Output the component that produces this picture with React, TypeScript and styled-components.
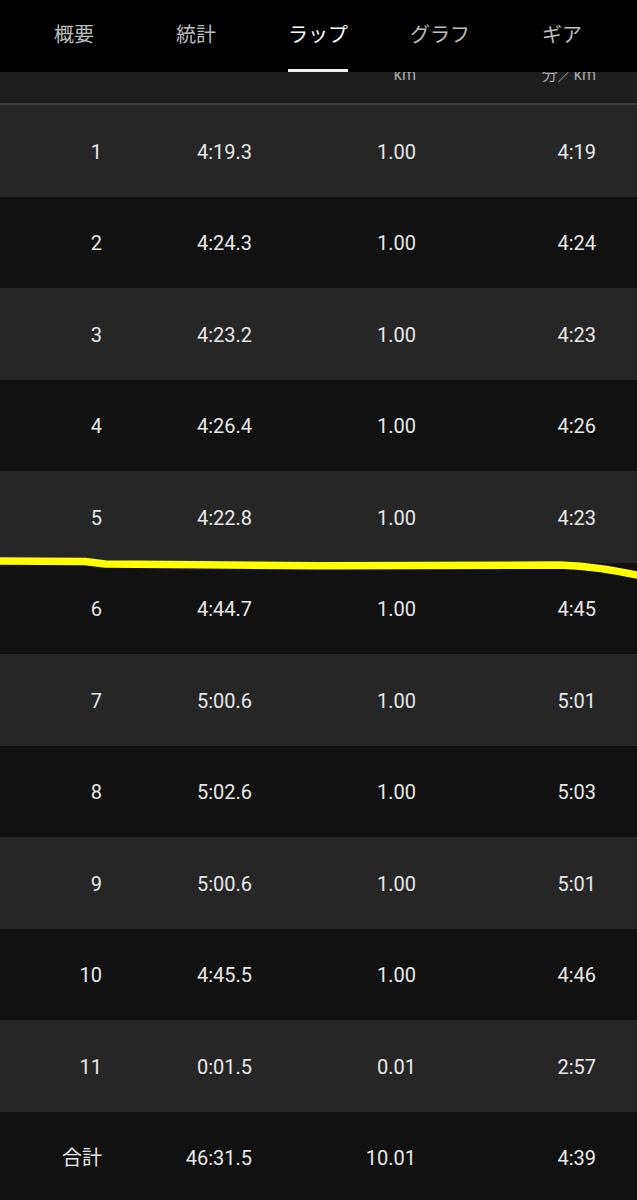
import React from 'react';
import styled, { createGlobalStyle, css } from 'styled-components';

const GlobalStyle = createGlobalStyle`
  html, body {
    margin: 0;
    padding: 0;
    background: #111111;
  }
  body {
    font-family: Roboto, "Noto Sans CJK JP", sans-serif;
    -webkit-font-smoothing: antialiased;
  }
`;

const tabs = ['概要', '統計', 'ラップ', 'グラフ', 'ギア'];
const activeTab = 2;

const laps = [
  ['1', '4:19.3', '1.00', '4:19'],
  ['2', '4:24.3', '1.00', '4:24'],
  ['3', '4:23.2', '1.00', '4:23'],
  ['4', '4:26.4', '1.00', '4:26'],
  ['5', '4:22.8', '1.00', '4:23'],
  ['6', '4:44.7', '1.00', '4:45'],
  ['7', '5:00.6', '1.00', '5:01'],
  ['8', '5:02.6', '1.00', '5:03'],
  ['9', '5:00.6', '1.00', '5:01'],
  ['10', '4:45.5', '1.00', '4:46'],
  ['11', '0:01.5', '0.01', '2:57'],
];

const total = ['合計', '46:31.5', '10.01', '4:39'];

const columns = '102px 150px 164px 180px';

const Screen = styled.div`
  position: relative;
  width: 637px;
  height: 1200px;
  overflow: hidden;
  background: #111111;
`;

const TabBar = styled.nav`
  display: grid;
  grid-template-columns: repeat(5, 122px);
  padding: 0 13px;
  height: 72px;
  background: #000000;
`;

const Tab = styled.div<{ $active?: boolean }>`
  position: relative;
  display: flex;
  align-items: center;
  justify-content: center;
  padding-bottom: 6px;
  box-sizing: border-box;
  font-family: "Noto Sans CJK JP", sans-serif;
  font-size: 20px;
  color: ${(p) => (p.$active ? '#ffffff' : '#bdbdbd')};
  ${(p) =>
    p.$active &&
    css`
      &::after {
        content: '';
        position: absolute;
        left: 50%;
        bottom: 0;
        width: 60px;
        height: 3px;
        transform: translateX(-50%);
        background: #f2f2f2;
      }
    `}
`;

const UnitRow = styled.div`
  display: grid;
  grid-template-columns: ${columns};
  height: 31px;
  overflow: hidden;
  background: #1e1e1e;
  border-bottom: 2px solid #3a3a3a;
`;

const Unit = styled.div`
  text-align: right;
  margin-top: -7px;
  font-size: 16px;
  line-height: 20px;
  color: #a8a8a8;
`;

const Row = styled.div<{ $odd?: boolean }>`
  display: grid;
  grid-template-columns: ${columns};
  align-items: center;
  height: 91.5px;
  padding-top: 2px;
  box-sizing: border-box;
  background: ${(p) => (p.$odd ? '#262626' : '#111111')};
`;

const Cell = styled.div`
  text-align: right;
  font-size: 20px;
  line-height: 24px;
  color: #e8e8e8;
`;

const Marker = styled.svg`
  position: absolute;
  top: 0;
  left: 0;
  pointer-events: none;
`;

export default function App() {
  return (
    <>
      <GlobalStyle />
      <Screen>
        <TabBar>
          {tabs.map((t, i) => (
            <Tab key={t} $active={i === activeTab}>
              {t}
            </Tab>
          ))}
        </TabBar>
        <UnitRow>
          <Unit />
          <Unit />
          <Unit>km</Unit>
          <Unit>分／km</Unit>
        </UnitRow>
        {laps.map((lap, i) => (
          <Row key={lap[0]} $odd={i % 2 === 0}>
            {lap.map((v, j) => (
              <Cell key={j}>{v}</Cell>
            ))}
          </Row>
        ))}
        <Row>
          {total.map((v, j) => (
            <Cell key={j}>{v}</Cell>
          ))}
        </Row>
        <Marker width="637" height="1200" viewBox="0 0 637 1200">
          <path
            d="M-4 561 L85 561.5 L105 564 L200 564.7 L320 565.8 L560 565 C590 566 612 570 642 576"
            fill="none"
            stroke="#ffff00"
            strokeWidth="7.5"
            strokeLinecap="round"
            strokeLinejoin="round"
          />
        </Marker>
      </Screen>
    </>
  );
}
